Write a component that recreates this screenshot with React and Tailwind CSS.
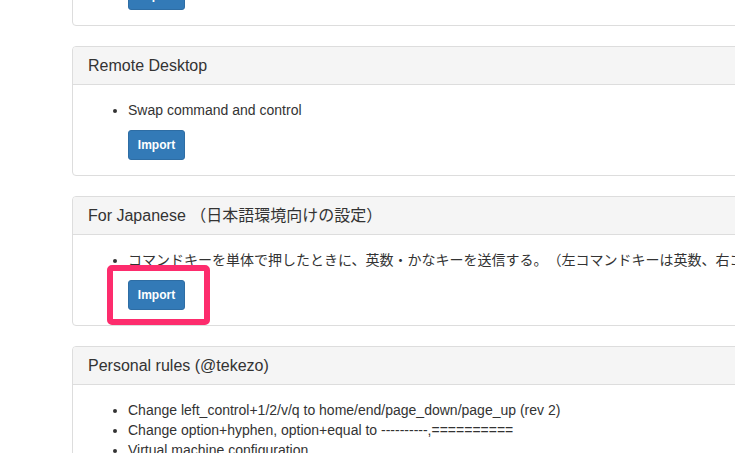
import React from 'react';

const sections = [
  { title: 'Emacs key bindings', items: ['Emacs key bindings (rev 10)'] },
  { title: 'Remote Desktop', items: ['Swap command and control'] },
  {
    title: 'For Japanese （日本語環境向けの設定）',
    items: ['コマンドキーを単体で押したときに、英数・かなキーを送信する。（左コマンドキーは英数、右コマンドキーはかな） (rev 2)'],
    highlight: true,
  },
  {
    title: 'Personal rules (@tekezo)',
    items: [
      'Change left_control+1/2/v/q to home/end/page_down/page_up (rev 2)',
      'Change option+hyphen, option+equal to ----------,==========',
      'Virtual machine configuration',
    ],
  },
];

function Panel({ section }) {
  return (
    <div className="mb-[20px] w-[1100px] rounded-[4px] border border-[#dddddd] bg-white">
      <div className="flex h-[38px] items-center rounded-t-[3px] border-b border-[#dddddd] bg-[#f5f5f5] px-[15px]">
        <h3 className="whitespace-nowrap text-[16px] leading-[17px] text-[#333333] [text-spacing-trim:space-all]">
          {section.title}
        </h3>
      </div>
      <div className="relative p-[15px]">
        <ul className="mb-[10px] list-disc pl-[40px] text-[14px] leading-[20px] text-[#333333]">
          {section.items.map((item) => (
            <li key={item} className="h-[20px] whitespace-nowrap [text-spacing-trim:space-all]">{item}</li>
          ))}
        </ul>
        <div className="pl-[40px]">
          <button className="h-[30px] w-[57px] rounded-[3px] border border-[#2e6da4] bg-[#337ab7] text-[12px] font-bold leading-[1.5] text-white">
            Import
          </button>
        </div>
        {section.highlight && (
          <div className="absolute left-[34px] top-[30px] h-[60px] w-[103px] rounded-[5px] border-[6px] border-[#fd2c6d]" />
        )}
      </div>
    </div>
  );
}

export default function App() {
  return (
    <div
      className="h-[453px] w-[735px] overflow-hidden bg-white"
      style={{ fontFamily: '"Liberation Sans", "Noto Sans CJK JP", Arial, sans-serif' }}
    >
      <div className="ml-[72px] mt-[-104px]">
        {sections.map((s) => (
          <Panel key={s.title} section={s} />
        ))}
      </div>
    </div>
  );
}
